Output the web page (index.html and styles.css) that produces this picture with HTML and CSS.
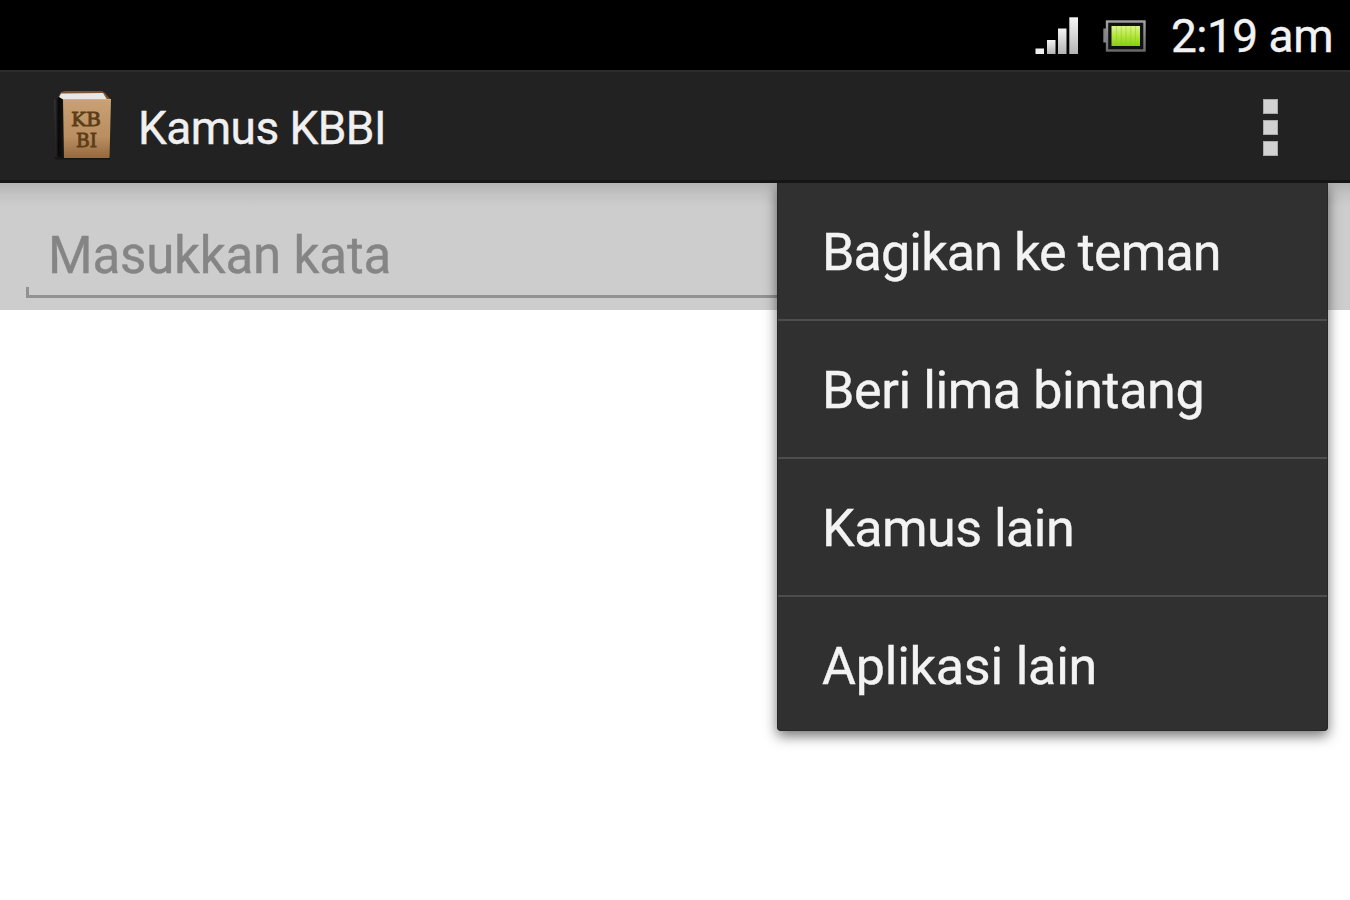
FILE: index.html
```
<!DOCTYPE html>
<html lang="id">
<head>
  <meta charset="UTF-8">
  <meta name="viewport" content="width=device-width, initial-scale=1.0">
  <title>Kamus KBBI</title>
  <link rel="stylesheet" href="styles.css">
</head>
<body>
  <div class="status-bar">
    <svg class="signal" width="44" height="38" viewBox="0 0 44 38">
      <defs>
        <linearGradient id="bar" x1="0" y1="0" x2="0" y2="1">
          <stop offset="0" stop-color="#f4f4f4"/>
          <stop offset="1" stop-color="#b4b4b4"/>
        </linearGradient>
      </defs>
      <rect x="0.5" y="31.5" width="8.5" height="5.5" fill="#f0f0f0"/>
      <rect x="12" y="23" width="8.5" height="14" fill="url(#bar)"/>
      <rect x="23" y="11.5" width="8.5" height="25.5" fill="url(#bar)"/>
      <rect x="34.3" y="0.3" width="8.7" height="36.7" fill="url(#bar)"/>
    </svg>
    <svg class="battery" width="44" height="32" viewBox="0 0 44 32">
      <defs>
        <linearGradient id="charge" x1="0" y1="0" x2="0" y2="1">
          <stop offset="0" stop-color="#d9f58a"/>
          <stop offset="0.5" stop-color="#b4e63c"/>
          <stop offset="1" stop-color="#86cf10"/>
        </linearGradient>
        <linearGradient id="case" x1="0" y1="0" x2="0" y2="1">
          <stop offset="0" stop-color="#a2a2a2"/>
          <stop offset="1" stop-color="#6c6c6c"/>
        </linearGradient>
      </defs>
      <rect x="0.3" y="8.5" width="3" height="14" fill="#858585"/>
      <rect x="4" y="1.5" width="37.5" height="29" fill="#111" stroke="url(#case)" stroke-width="2.4"/>
      <rect x="8.5" y="6" width="28.5" height="20" fill="url(#charge)"/>
      <path d="M13.5 6v20M18.3 6v20M23 6v20M27.8 6v20M32.5 6v20" stroke="#8fc42c" stroke-width="0.9" opacity="0.5"/>
    </svg>
    <span class="time">2:19 am</span>
  </div>

  <div class="action-bar">
    <svg class="logo" width="62" height="72" viewBox="0 0 62 72">
      <defs>
        <linearGradient id="cover" x1="0" y1="0" x2="0" y2="1">
          <stop offset="0" stop-color="#c9a174"/>
          <stop offset="0.65" stop-color="#b98e60"/>
          <stop offset="1" stop-color="#946940"/>
        </linearGradient>
        <linearGradient id="spine" x1="0" y1="0" x2="1" y2="0">
          <stop offset="0" stop-color="#3a3a3a"/>
          <stop offset="0.45" stop-color="#080808"/>
          <stop offset="1" stop-color="#171717"/>
        </linearGradient>
      </defs>
      <path d="M1 67h56v2.500H3z" fill="#151515"/>
      <path d="M8 2L12 1H49L52 3L58 10L4 10z" fill="#7a5433"/>
      <path d="M8 3.500L50 3L54 9.500H5z" fill="#e6e8e8"/>
      <path d="M1 10L6 7L11 10V68L3 66z" fill="url(#spine)"/>
      <path d="M10 9H58L56.500 68H11z" fill="url(#cover)"/>
      <path d="M10 9.500H58" stroke="#d2b084" stroke-width="1"/>
      <text class="logo-text" x="33" y="35.500" textLength="30" lengthAdjust="spacingAndGlyphs">KB</text>
      <text class="logo-text" x="33.500" y="56.500" textLength="21" lengthAdjust="spacingAndGlyphs">BI</text>
    </svg>
    <h1 class="title">Kamus KBBI</h1>
    <div class="overflow">
      <span></span>
      <span></span>
      <span></span>
    </div>
  </div>

  <div class="search">
    <div class="field">Masukkan kata</div>
  </div>

  <ul class="menu">
    <li class="share">Bagikan ke teman</li>
    <li class="rate">Beri lima bintang</li>
    <li class="other-dict">Kamus lain</li>
    <li class="other-apps">Aplikasi lain</li>
  </ul>
</body>
</html>
```
FILE: styles.css
```
* {
  margin: 0;
  padding: 0;
  box-sizing: border-box;
}

body {
  position: relative;
  height: 900px;
  background: #fff;
  font-family: Roboto, "Liberation Sans", sans-serif;
  -webkit-text-stroke: 0.4px;
  overflow: hidden;
}

.status-bar {
  display: flex;
  justify-content: flex-end;
  align-items: center;
  height: 70px;
  padding: 2px 17px 0 0;
  background: #000;
}

.signal {
  margin-right: 24px;
}

.battery {
  margin-right: 24px;
}

.time {
  font-size: 46px;
  line-height: 68px;
  letter-spacing: -0.5px;
  color: #f2f2f2;
}

.action-bar {
  display: flex;
  align-items: center;
  height: 113px;
  padding: 0 72px 0 53px;
  background: #222;
  border-top: 2px solid #2d2d2d;
  border-bottom: 3px solid #151515;
}

.logo-text {
  font-family: "DejaVu Serif", serif;
  font-size: 18px;
  text-anchor: middle;
  fill: #5b3d18;
  stroke: #5b3d18;
  stroke-width: 0.8px;
  -webkit-text-stroke: 0;
}

.title {
  margin-left: 23px;
  padding-top: 3px;
  font-size: 46px;
  font-weight: normal;
  letter-spacing: -0.55px;
  color: #f0f0f0;
}

.overflow {
  display: flex;
  flex-direction: column;
  gap: 6px;
  margin-left: auto;
  padding-top: 2px;
}

.overflow span {
  width: 15px;
  height: 15px;
  background: #d2d2d2;
  border: 1px solid #aaa;
}

.search {
  height: 127px;
  padding: 0 26px;
  background: linear-gradient(#b2b2b2, #c4c4c4 12px, #cdcdcd 24px);
}

.field {
  height: 115px;
  padding: 43px 22px 0;
  font-size: 51px;
  line-height: 60px;
  letter-spacing: -0.15px;
  color: #858585;
  background:
    linear-gradient(#929292, #929292) left bottom / 100% 3px no-repeat,
    linear-gradient(#929292, #929292) left bottom / 3px 11px no-repeat,
    linear-gradient(#929292, #929292) right bottom / 3px 11px no-repeat;
}

.menu {
  position: absolute;
  top: 183px;
  left: 777px;
  width: 551px;
  height: 548px;
  list-style: none;
  background: #303030;
  border: 1px solid #282828;
  border-top: none;
  border-radius: 0 0 4px 4px;
  box-shadow: 0 5px 13px rgba(0, 0, 0, 0.55);
  clip-path: inset(0 -22px -30px -30px);
}

.menu li {
  height: 138px;
  padding: 1px 0 0 44px;
  font-size: 52px;
  line-height: 138px;
  color: #f3f3f3;
  border-bottom: 2px solid #4d4d4d;
}

.menu li:last-child {
  border-bottom: none;
}

.share {
  letter-spacing: -0.85px;
}

.rate {
  letter-spacing: -0.4px;
}

.other-dict {
  letter-spacing: -0.5px;
}

.other-apps {
  letter-spacing: -0.2px;
}
```
